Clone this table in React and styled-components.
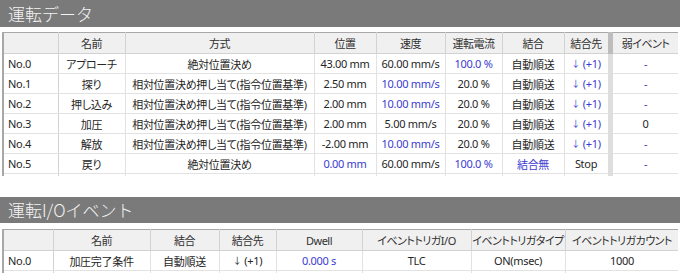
import React from "react";
import styled, { createGlobalStyle } from "styled-components";

const Global = createGlobalStyle`
  html, body { margin: 0; padding: 0; background: #ffffff; }
  body { font-family: "Noto Sans", "Noto Sans CJK JP", sans-serif; }
`;

const Page = styled.div`
  width: 680px;
  height: 273px;
  overflow: hidden;
  display: flex;
  flex-direction: column;
`;

const TitleBar = styled.div`
  height: ${(p) => p.h}px;
  margin-top: ${(p) => p.mt || 0}px;
  background: #7a7a7a;
  color: #f4f4f4;
  font-family: "Noto Sans CJK JP", sans-serif;
  font-size: 17px;
  font-weight: 300;
  line-height: ${(p) => p.h}px;
  padding-left: 8px;
  flex-shrink: 0;
`;

const Viewport = styled.div`
  margin: ${(p) => p.mt}px 2px 0 2px;
  height: ${(p) => p.h}px;
  overflow: hidden;
  flex-shrink: 0;
`;

const Grid = styled.table`
  table-layout: fixed;
  border-collapse: collapse;
  width: 676px;
  border-top: 1px solid #a8a8a8;
  border-left: 2px solid #a8a8a8;
  font-size: 11px;
  letter-spacing: -0.3px;
  color: #262626;
  font-family: "Noto Sans", "Noto Sans CJK JP", sans-serif;
  font-feature-settings: "palt";
`;

const Head = styled.th`
  height: 20px;
  padding: 0;
  background: #f0f0f0;
  font-weight: 400;
  color: #303030;
  letter-spacing: -0.5px;
  border: 1px solid #d2d2d2;
  border-top: none;
  text-align: center;
  white-space: nowrap;
  overflow: hidden;
  ${(p) => p.split && "border-left: 5px solid #bdbdbd;"}
`;

const Cell = styled.td`
  height: 19px;
  padding: 0;
  border: 1px solid #e2e2e2;
  text-align: ${(p) => (p.left ? "left" : "center")};
  color: ${(p) => (p.blue ? "#3b3bd2" : "#262626")};
  white-space: nowrap;
  overflow: hidden;
  ${(p) => p.left && "border-right-color: #d2d2d2; padding-left: 4px;"}
  ${(p) => p.split && "border-left: 5px solid #dedede;"}
`;

const Arrow = styled.span`
  font-size: 9px;
  margin-right: 3px;
  position: relative;
  top: -1px;
`;

const rel = "相対位置決め押し当て(指令位置基準)";
const NEXT = "↓|(+1)";

const cols1 = [55, 67, 189, 62, 69, 57, 62, 46, 69];
const heads1 = ["", "名前", "方式", "位置", "速度", "運転電流", "結合", "結合先", "弱イベント"];
const rows1 = [
  ["No.0", "アプローチ", "絶対位置決め", "43.00 mm", "60.00 mm/s", "100.0 %", "自動順送", NEXT, "-"],
  ["No.1", "探り", rel, "2.50 mm", "10.00 mm/s", "20.0 %", "自動順送", NEXT, "-"],
  ["No.2", "押し込み", rel, "2.00 mm", "10.00 mm/s", "20.0 %", "自動順送", NEXT, "-"],
  ["No.3", "加圧", rel, "2.00 mm", "5.00 mm/s", "20.0 %", "自動順送", NEXT, "0"],
  ["No.4", "解放", rel, "-2.00 mm", "10.00 mm/s", "20.0 %", "自動順送", NEXT, "-"],
  ["No.5", "戻り", "絶対位置決め", "0.00 mm", "60.00 mm/s", "100.0 %", "結合無", "Stop", "-"],
  ["", "", "", "", "", "", "", "", ""],
];

// which cells are drawn in blue (row index -> column indexes)
const blue1 = {
  0: [5, 7, 8],
  1: [4, 7, 8],
  2: [4, 7, 8],
  3: [7],
  4: [4, 7, 8],
  5: [3, 5, 6, 8],
};

const cols2 = [50, 97, 69, 57, 86, 109, 94, 114];
const heads2 = ["", "名前", "結合", "結合先", "Dwell", "イベントトリガI/O", "イベントトリガタイプ", "イベントトリガカウント"];
const rows2 = [
  ["No.0", "加圧完了条件", "自動順送", NEXT, "0.000 s", "TLC", "ON(msec)", "1000"],
  ["", "", "", "", "", "", "", ""],
];

const renderValue = (v) => {
  if (v === NEXT) {
    return (
      <>
        <Arrow>↓</Arrow>(+1)
      </>
    );
  }
  return v;
};

const DataGrid = ({ cols, heads, rows, blue = {}, splitAt }) => (
  <Grid>
    <colgroup>
      {cols.map((w, i) => (
        <col key={i} style={{ width: w }} />
      ))}
    </colgroup>
    <thead>
      <tr>
        {heads.map((h, i) => (
          <Head key={i} split={i === splitAt}>
            {h}
          </Head>
        ))}
      </tr>
    </thead>
    <tbody>
      {rows.map((r, ri) => (
        <tr key={ri}>
          {r.map((v, ci) => (
            <Cell
              key={ci}
              left={ci === 0}
              split={ci === splitAt}
              blue={(blue[ri] || []).includes(ci)}
            >
              {renderValue(v)}
            </Cell>
          ))}
        </tr>
      ))}
    </tbody>
  </Grid>
);

export default function App() {
  return (
    <Page>
      <Global />
      <TitleBar h={27}>運転データ</TitleBar>
      <Viewport mt={5} h={144}>
        <DataGrid cols={cols1} heads={heads1} rows={rows1} blue={blue1} splitAt={8} />
      </Viewport>
      <TitleBar h={26} mt={21}>運転I/Oイベント</TitleBar>
      <Viewport mt={6} h={44}>
        <DataGrid cols={cols2} heads={heads2} rows={rows2} blue={{ 0: [4] }} />
      </Viewport>
    </Page>
  );
}
